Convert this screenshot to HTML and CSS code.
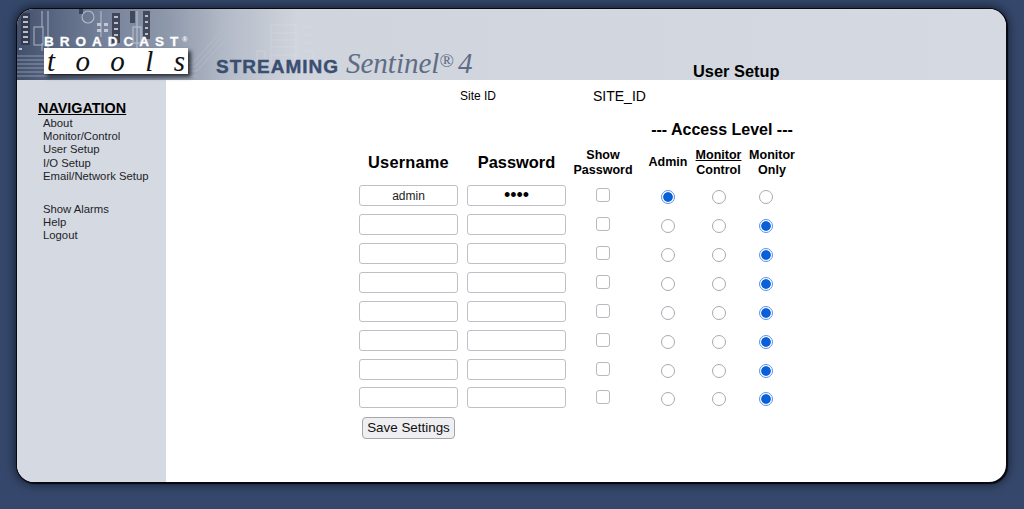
FILE: index.html
```html
<!DOCTYPE html>
<html lang="en">
<head>
<meta charset="utf-8">
<title>User Setup</title>
<link rel="stylesheet" href="styles.css">
</head>
<body>
<div class="panel">
  <header class="banner">
    <svg class="circuit" width="320" height="71" viewBox="0 0 320 71" aria-hidden="true">
      <defs>
        <filter id="soft"><feGaussianBlur stdDeviation=".6"/></filter>
      </defs>
      <g filter="url(#soft)">
        <g fill="none" stroke="#b9c0cc" stroke-width="1" opacity=".6">
          <path d="M0 47H60M0 51H50M0 55H50M0 59H50M0 63H50M0 67H180"/>
          <path d="M170 62h10l54-60M170 58h8l50-56M170 54h6l46-52"/>
        </g>
        <g fill="none" stroke="#e2e5eb" stroke-width="1" opacity=".28">
          <path d="M254 16h25v38h-25zM254 24h25M254 31h25M254 38h25M254 46h25"/>
          <path d="M240 42h8v12h-8zM288 18h8M288 26h8M288 34h8M288 42h8v12"/>
        </g>
        <g fill="none" stroke="#d6dae2" stroke-width="1.1" opacity=".65">
          <circle cx="71" cy="8" r="6"/>
          <path d="M25 2v16M25 34v8M31 2v40M84 2v26M120 2v38"/>
          <rect x="17" y="18" width="9" height="18"/>
          <rect x="116" y="18" width="8" height="16"/>
        </g>
        <g fill="#2b3144" opacity=".75">
          <rect x="4" y="4" width="9" height="32"/>
          <rect x="95" y="4" width="8" height="30"/>
          <rect x="113" y="2" width="5" height="12"/>
          <rect x="126" y="2" width="7" height="28"/>
          <rect x="62" y="0" width="4" height="5"/>
        </g>
        <g fill="#cfd4dd" opacity=".85">
          <rect x="6" y="7" width="5" height="2"/><rect x="6" y="12" width="5" height="2"/>
          <rect x="6" y="17" width="5" height="2"/><rect x="6" y="22" width="5" height="2"/>
          <rect x="6" y="27" width="5" height="2"/><rect x="6" y="32" width="5" height="2"/>
          <rect x="97" y="7" width="4" height="2"/><rect x="97" y="13" width="4" height="2"/>
          <rect x="97" y="19" width="4" height="2"/><rect x="97" y="25" width="4" height="2"/>
          <rect x="128" y="6" width="3" height="2"/><rect x="128" y="12" width="3" height="2"/>
          <rect x="128" y="18" width="3" height="2"/><rect x="128" y="24" width="3" height="2"/>
          <rect x="80" y="14" width="4" height="3"/><rect x="87" y="14" width="4" height="3"/>
          <rect x="80" y="20" width="4" height="3"/><rect x="87" y="20" width="4" height="3"/>
          <rect x="2" y="39" width="3" height="2"/>
        </g>
      </g>
    </svg>
    <div class="logo">
      <div class="logo-top">BROADCAST<span class="logo-mark">®</span></div>
      <div class="logo-box"><span>t</span><span>o</span><span>o</span><span>l</span><span>s</span></div>
    </div>
    <div class="product">
      <span class="streaming">STREAMING</span>
      <span class="sentinel">Sentinel<span class="reg">®</span> 4</span>
    </div>
    <h1 class="page-title">User Setup</h1>
  </header>
  <div class="body-row">
    <nav class="sidebar">
      <h2 class="nav-title">NAVIGATION</h2>
      <ul class="nav-list">
        <li>About</li>
        <li>Monitor/Control</li>
        <li>User Setup</li>
        <li>I/O Setup</li>
        <li>Email/Network Setup</li>
      </ul>
      <ul class="nav-list nav-second">
        <li>Show Alarms</li>
        <li>Help</li>
        <li>Logout</li>
      </ul>
    </nav>
    <main class="content">
      <div class="site-row">
        <span class="site-label">Site ID</span>
        <span class="site-value">SITE_ID</span>
      </div>
      <form class="users">
        <div class="access-head">--- Access Level ---</div>
        <div class="col-head big user-head">Username</div>
        <div class="col-head big">Password</div>
        <div class="col-head small">Show<br>Password</div>
        <div class="col-head small">Admin</div>
        <div class="col-head small"><span class="under">Monitor</span><br>Control</div>
        <div class="col-head small only-head">Monitor<br>Only</div>

        <input class="field user" type="text" value="admin">
        <input class="field pass" type="password" value="abcd">
        <input class="check" type="checkbox">
        <input class="radio" type="radio" name="r1" checked>
        <input class="radio" type="radio" name="r1">
        <input class="radio" type="radio" name="r1">

        <input class="field user" type="text"><input class="field" type="password"><input class="check" type="checkbox">
        <input class="radio" type="radio" name="r2"><input class="radio" type="radio" name="r2"><input class="radio" type="radio" name="r2" checked>

        <input class="field user" type="text"><input class="field" type="password"><input class="check" type="checkbox">
        <input class="radio" type="radio" name="r3"><input class="radio" type="radio" name="r3"><input class="radio" type="radio" name="r3" checked>

        <input class="field user" type="text"><input class="field" type="password"><input class="check" type="checkbox">
        <input class="radio" type="radio" name="r4"><input class="radio" type="radio" name="r4"><input class="radio" type="radio" name="r4" checked>

        <input class="field user" type="text"><input class="field" type="password"><input class="check" type="checkbox">
        <input class="radio" type="radio" name="r5"><input class="radio" type="radio" name="r5"><input class="radio" type="radio" name="r5" checked>

        <input class="field user" type="text"><input class="field" type="password"><input class="check" type="checkbox">
        <input class="radio" type="radio" name="r6"><input class="radio" type="radio" name="r6"><input class="radio" type="radio" name="r6" checked>

        <input class="field user" type="text"><input class="field" type="password"><input class="check" type="checkbox">
        <input class="radio" type="radio" name="r7"><input class="radio" type="radio" name="r7"><input class="radio" type="radio" name="r7" checked>

        <input class="field user" type="text"><input class="field" type="password"><input class="check" type="checkbox">
        <input class="radio" type="radio" name="r8"><input class="radio" type="radio" name="r8"><input class="radio" type="radio" name="r8" checked>

        <button class="save" type="button">Save Settings</button>
      </form>
    </main>
  </div>
</div>
</body>
</html>
```

FILE: styles.css
```css
* { box-sizing: border-box; }
html, body { margin: 0; height: 100%; }
body {
  height: 509px;
  overflow: hidden;
  padding: 9px 17px 25px 17px;
  background: #35486b;
  font-family: "Liberation Sans", Arial, sans-serif;
  color: #000;
}
.panel {
  width: 989px;
  height: 473px;
  border-radius: 17px;
  overflow: hidden;
  background: #fff;
  display: flex;
  flex-direction: column;
  box-shadow: 0 0 0 1px #070a12, 1px 1px 1px 1px #05070d, 0 0 9px 3px rgba(8, 12, 24, .6);
}
.banner {
  position: relative;
  height: 71px;
  flex: none;
  display: flex;
  align-items: flex-start;
  background: linear-gradient(90deg, #414f6c 0, #5a6883 40px, #77839c 90px, #8e98ab 150px, #b4bbc8 210px, #d0d4dc 280px, #d5d9e1 100%);
}
.circuit { position: absolute; left: 0; top: 0; }
.logo { position: relative; width: 199px; padding: 26px 0 0 27px; flex: none; }
.logo-top {
  height: 13px;
  font-size: 13.5px;
  line-height: 13px;
  font-weight: 700;
  letter-spacing: 6px;
  color: #fff;
  white-space: nowrap;
  -webkit-text-stroke: .3px #fff;
}
.logo-mark { font-size: 7px; letter-spacing: 0; vertical-align: 4px; line-height: 0; margin-left: -2px; -webkit-text-stroke: 0; }
.logo-box {
  width: 144px;
  height: 26px;
  padding: 0 3px 0 3px;
  background: #fff;
  box-shadow: 3px 3px 4px rgba(0, 0, 0, .7);
  display: flex;
  justify-content: space-between;
  font: italic 29px/27px "Liberation Serif", "Times New Roman", serif;
  color: #111;
}
.product { position: relative; padding-top: 40px; display: flex; align-items: baseline; width: 477px; flex: none; }
.streaming {
  font-size: 19px;
  line-height: 28px;
  font-weight: 700;
  color: #394e70;
  letter-spacing: 1px;
  -webkit-text-stroke: .4px #394e70;
}
.sentinel {
  margin-left: 7px;
  font: italic 29px/28px "Liberation Serif", "Times New Roman", serif;
  color: #5e6c85;
  word-spacing: -3px;
}
.reg { font-size: 19px; font-style: normal; vertical-align: 6px; line-height: 0; }
.page-title { position: relative; margin: 52px 0 0 0; font-size: 16.4px; line-height: 20px; font-weight: 700; white-space: nowrap; }
.body-row { flex: 1; display: flex; min-height: 0; }
.sidebar { width: 149px; flex: none; background: #d5d9e1; padding: 19px 0 0 21px; }
.nav-title {
  margin: 0;
  font-size: 14.4px;
  line-height: 18px;
  font-weight: 700;
  text-decoration: underline;
}
.nav-list { list-style: none; margin: 0; padding: 0 0 0 5px; font-size: 11.3px; line-height: 13.2px; color: #1e1e28; }
.nav-second { margin-top: 20px; }
.content { flex: 1; padding-top: 6px; font-size: 12px; }
.site-row { display: flex; height: 19px; align-items: center; padding-left: 294px; }
.site-label { width: 133px; font-size: 12px; }
.site-value { font-size: 14px; }
.users {
  display: grid;
  grid-template-columns: 108px 99px 74px 56px 45px 49px;
  grid-template-rows: 23px 41px repeat(8, 28.86px) auto;
  width: 431px;
  margin: 13px 0 0 193px;
  align-items: center;
  justify-items: center;
}
.access-head {
  grid-column: 4 / 7;
  padding-left: 14px;
  font-size: 16px;
  font-weight: 700;
  white-space: nowrap;
}
.col-head { text-align: center; font-weight: 700; white-space: nowrap; grid-row: 2; padding-top: 2px; }
.big { font-size: 16.4px; }
.user-head { width: 99px; justify-self: start; letter-spacing: .2px; }
.only-head { padding-left: 13px; }
.small { font-size: 12.5px; line-height: 15px; }
.under { text-decoration: underline; }
.field {
  width: 99px;
  height: 21px;
  margin: 0 0 1px;
  padding: 0 2px;
  border: 1.5px solid #bfbfc7;
  border-radius: 3px;
  background: #fff;
  text-align: center;
  font: 12px "Liberation Sans", Arial, sans-serif;
  color: #222;
  outline: 0;
}
.user { justify-self: start; }
.pass { font-size: 18px; color: #000; }
.check, .radio {
  appearance: none;
  width: 14px;
  height: 14px;
  margin: 0;
  background: #fff;
  border: 1px solid #a9a9b2;
}
.check { border-radius: 3px; border-width: 1.5px; border-color: #b8b8c0; margin-bottom: 2px; }
.radio { border-radius: 50%; transform: translateY(1px); }
.radio:checked {
  border-color: #5b93ee;
  background: radial-gradient(circle, #0a60d8 0, #0a60d8 4.4px, #fff 5.2px);
}
.save {
  grid-column: 1;
  justify-self: start;
  width: 93px;
  height: 22px;
  margin: 4px 0 0 3px;
  padding: 0;
  border: 1px solid #a4a4ad;
  border-radius: 4px;
  background: #efeff1;
  font: 13.4px "Liberation Sans", Arial, sans-serif;
  color: #111;
}
```
